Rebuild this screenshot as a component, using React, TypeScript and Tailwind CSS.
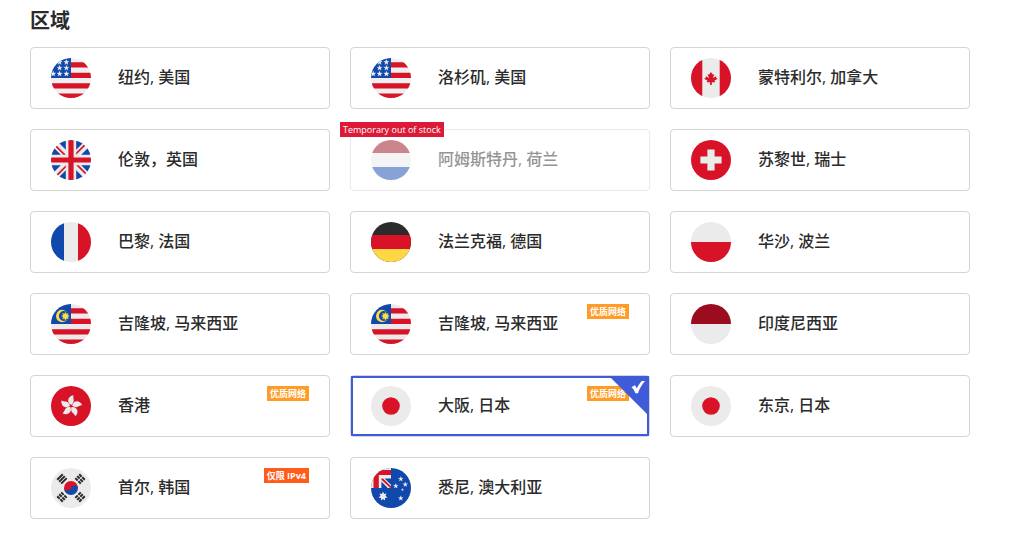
import { useId, useState } from "react";
import type { ReactNode } from "react";

const RED = "#d81227";
const WHITE = "#ebebeb";
const BLUE = "#1148ac";

const STAR =
  "M0-2.7 .65-.85 2.6-.84 1.05.34 1.6 2.2 0 1.1-1.6 2.2-1.05.34-2.6-.84-.65-.85Z";

function Stars({ points, scale }: { points: number[][]; scale: number }) {
  return (
    <>
      {points.map(([x, y]) => (
        <path
          key={`${x}-${y}`}
          d={STAR}
          fill="#f4f4f4"
          stroke="#f4f4f4"
          strokeWidth=".3"
          transform={`translate(${x} ${y}) scale(${scale})`}
        />
      ))}
    </>
  );
}

const usStripes = (
  <path d="M20 4.3h20v5.3H20zM20 14.8h20V20H20zM0 25.2h40v5.2H0zM0 35.6h40V40H0z" fill={RED} />
);

const flags: Record<string, ReactNode> = {
  us: (
    <>
      <rect width="40" height="40" fill="#efefef" />
      {usStripes}
      <path d="M0 0h20v20H0z" fill={BLUE} />
      <Stars
        points={[[8.6, 4.2], [15.4, 4.2], [8.6, 10], [15.4, 10], [2.2, 15.8], [8.6, 15.8], [15.4, 15.8]]}
        scale={1}
      />
    </>
  ),
  my: (
    <>
      <rect width="40" height="40" fill={WHITE} />
      {usStripes}
      <path d="M0 0h20v20H0z" fill={BLUE} />
      <path d="M16.5 8.8A6.2 6.2 0 1 0 16.5 15.2A4.9 4.9 0 1 1 16.5 8.8Z" fill="#ffda44" />
      <path
        d="m14.4 8.2.9 1.7 1.8-.7-.5 1.9 1.8.9-1.7 1 .7 1.900-1.900-.5-1 1.800-1-1.800-1.900.6.6-1.900-1.700-1 1.800-.9-.7-1.900 1.900.6z"
        fill="#ffda44"
        stroke="#ffda44"
        strokeWidth=".3"
      />
    </>
  ),
  ca: (
    <>
      <rect width="40" height="40" fill={WHITE} />
      <path d="M0 0h11.3v40H0zM28.7 0H40v40H28.7z" fill={RED} />
      <path
        d="M299.82 289.39l44.53-22.26-22.26-11.13v-22.26l-44.53 22.26 22.26-44.52h-22.26L255.3 178.09 233.04 211.48h-22.26l22.26 44.52-44.53-22.26V256l-22.26 11.13 44.53 22.26-11.13 22.26h44.53v33.39h22.26v-33.39h44.53z"
        fill={RED}
        transform="scale(.078125)"
      />
    </>
  ),
  gb: (
    <>
      <rect width="40" height="40" fill={WHITE} />
      <path
        d="M0 5l9.8 9.8H0zM5 0l9.8 9.8V0zM35 0l-9.8 9.8V0zM40 5l-9.8 9.8H40zM0 35l9.8-9.8H0zM5 40l9.8-9.8V40zM35 40l-9.8-9.8V40zM40 35l-9.8-9.8H40z"
        fill={BLUE}
      />
      <path d="M17.4 0h5.2v17.4H40v5.2H22.6V40h-5.2V22.6H0v-5.2h17.4z" fill={RED} />
      <path
        d="M4.6 7 3 3l11.8 11.8h-2.4zM35.4 33 37 37 25.2 25.2h2.4zM33 4.6 37 3 25.2 14.8v-2.4zM7 35.4 3 37l11.8-11.8v2.4z"
        fill={RED}
      />
    </>
  ),
  nl: (
    <>
      <rect width="40" height="40" fill={WHITE} />
      <path d="M0 0h40v13H0z" fill="#9b0d1e" />
      <path d="M0 27h40v13H0z" fill={BLUE} />
    </>
  ),
  ch: (
    <>
      <rect width="40" height="40" fill={RED} />
      <path d="M16.4 9.4h7.2v7h7v7.2h-7v7h-7.2v-7h-7v-7.2h7z" fill={WHITE} />
    </>
  ),
  fr: (
    <>
      <rect width="40" height="40" fill={WHITE} />
      <path d="M0 0h13v40H0z" fill={BLUE} />
      <path d="M27 0h13v40H27z" fill={RED} />
    </>
  ),
  de: (
    <>
      <rect width="40" height="40" fill="#2b2b2b" />
      <path d="M0 13h40v14H0z" fill={RED} />
      <path d="M0 27h40v13H0z" fill="#ffd744" />
    </>
  ),
  pl: (
    <>
      <rect width="40" height="40" fill={WHITE} />
      <path d="M0 20h40v20H0z" fill={RED} />
    </>
  ),
  id: (
    <>
      <rect width="40" height="40" fill={WHITE} />
      <path d="M0 0h40v20H0z" fill="#9b0d1e" />
    </>
  ),
  hk: (
    <>
      <rect width="40" height="40" fill={RED} />
      {[0, 72, 144, 216, 288].map((angle) => (
        <path
          key={angle}
          d="M20.2 18.9C15.2 16.5 16.6 9.8 22.6 9.2 21.3 12.6 25 15.2 20.2 18.9Z"
          fill={WHITE}
          transform={`rotate(${angle} 20 20)`}
        />
      ))}
    </>
  ),
  jp: (
    <>
      <rect width="40" height="40" fill={WHITE} />
      <circle cx="20" cy="20" r="8.8" fill={RED} />
    </>
  ),
  kr: (
    <>
      <rect width="40" height="40" fill={WHITE} />
      <path d="M13 20a7 7 0 0 1 14 0z" fill={RED} />
      <path d="M13 20a7 7 0 0 0 14 0z" fill={BLUE} />
      <path d="M13 20a3.5 2.3 0 0 0 7 0z" fill={RED} />
      <path d="M20 20a3.5 2.3 0 0 1 7 0z" fill={BLUE} />
      <g stroke="#2b2b2b" strokeWidth="2">
        <path d="M6.2 11.8 11.8 6.2M8.2 13.7 13.8 8.1M10.2 15.6 15.7 10.1" />
        <path d="M28.2 6.2 33.8 11.8M26.2 8.1 31.8 13.7M24.3 10.1 29.8 15.6" strokeDasharray="3.5 .9" />
        <path d="M6.2 28.2 11.8 33.8M8.2 26.3 13.8 31.9M10.2 24.4 15.7 29.9" strokeDasharray="3.5 .9" />
        <path d="M28.2 33.8 33.8 28.2M26.2 31.9 31.8 26.3M24.3 29.9 29.8 24.4" strokeDasharray="3.5 .9" />
      </g>
    </>
  ),
  au: (
    <>
      <rect width="40" height="40" fill={BLUE} />
      <path d="M0 0h20v20H0z" fill={WHITE} />
      <path d="M2.5 20V7.5L7.5 2H20v5H7.8v13z" fill={RED} />
      <path d="M10.4 13.6V20h6.4zM13.6 10.4H20v6.4z" fill={BLUE} />
      <path d="M10.4 10.4h1.7L20 18.3V20h-.7l-8.9-8.2z" fill={RED} />
      <path
        d="m12 23.6 1.1 2.4 2.5-.6-1.1 2.4 2 1.6-2.5.6v2.6L12 31l-2 1.6V30l-2.5-.6 2-1.6-1.1-2.4 2.5.6z"
        fill={WHITE}
      />
      <Stars points={[[29.8, 11], [24.8, 18], [34.3, 16.4], [29.8, 30.2]]} scale={0.9} />
      <Stars points={[[31.5, 21.7]]} scale={0.5} />
    </>
  ),
};

function Flag({ code }: { code: string }) {
  const clip = useId();
  return (
    <svg viewBox="0 0 40 40" className="size-10 shrink-0" aria-hidden="true">
      <clipPath id={clip}>
        <circle cx="20" cy="20" r="20" />
      </clipPath>
      <g clipPath={`url(#${clip})`}>{flags[code]}</g>
    </svg>
  );
}

interface Region {
  id: string;
  flag: string;
  name: string;
  tag?: string;
  tagColor?: string;
  soldOut?: boolean;
}

const regions: Region[] = [
  { id: "nyc", flag: "us", name: "纽约, 美国" },
  { id: "lax", flag: "us", name: "洛杉矶, 美国" },
  { id: "yul", flag: "ca", name: "蒙特利尔, 加拿大" },
  { id: "lon", flag: "gb", name: "伦敦，英国" },
  { id: "ams", flag: "nl", name: "阿姆斯特丹, 荷兰", soldOut: true },
  { id: "zrh", flag: "ch", name: "苏黎世, 瑞士" },
  { id: "par", flag: "fr", name: "巴黎, 法国" },
  { id: "fra", flag: "de", name: "法兰克福, 德国" },
  { id: "waw", flag: "pl", name: "华沙, 波兰" },
  { id: "kul", flag: "my", name: "吉隆坡, 马来西亚" },
  { id: "kul-premium", flag: "my", name: "吉隆坡, 马来西亚", tag: "优质网络", tagColor: "bg-[#ff9b26]" },
  { id: "idn", flag: "id", name: "印度尼西亚" },
  { id: "hkg", flag: "hk", name: "香港", tag: "优质网络", tagColor: "bg-[#ff9b26]" },
  { id: "osa", flag: "jp", name: "大阪, 日本", tag: "优质网络", tagColor: "bg-[#ff9b26]" },
  { id: "tyo", flag: "jp", name: "东京, 日本" },
  { id: "sel", flag: "kr", name: "首尔, 韩国", tag: "仅限 IPv4", tagColor: "bg-[#ff5c1c]" },
  { id: "syd", flag: "au", name: "悉尼, 澳大利亚" },
];

function RegionCard({
  region,
  selected,
  onSelect,
}: {
  region: Region;
  selected: boolean;
  onSelect: () => void;
}) {
  return (
    <label className="relative block has-focus-visible:outline-2 has-focus-visible:outline-[#3f5bd8]">
      <input
        type="radio"
        name="region"
        value={region.id}
        checked={selected}
        disabled={region.soldOut}
        onChange={onSelect}
        className="sr-only"
      />
      <span
        className={`flex items-center gap-[27px] rounded border border-[#d5d5d5] px-5 py-2.5 ${
          region.soldOut ? "opacity-50" : "cursor-pointer"
        }`}
      >
        <Flag code={region.flag} />
        <span className="pb-0.5 text-base font-medium">{region.name}</span>
      </span>
      {region.tag && (
        <span
          className={`absolute top-[11px] right-[21px] px-[3px] text-[9px] leading-[15px] font-bold text-white ${region.tagColor}`}
        >
          {region.tag}
        </span>
      )}
      {region.soldOut && (
        <span className="absolute -top-[7px] -left-2.5 bg-[#dc1a38] px-[3px] text-[9px] leading-[15px] font-medium text-white">
          Temporary out of stock
        </span>
      )}
      {selected && (
        <span className="pointer-events-none absolute inset-px border-2 border-[#3f5bd8]">
          <svg viewBox="0 0 40 40" className="absolute -top-0.5 -right-0.5 size-10" aria-hidden="true">
            <path d="M0 0h40v40z" fill="#3f5bd8" />
            <path
              d="M22.5 11.3 25.7 9.3C26.7 10 27.4 11 27.8 12.4 29.6 9 31.3 6.3 32.8 5H36C33 8.5 30.5 12.5 29 17.2H26.4C25.3 14.5 24.3 12.8 22.5 11.3Z"
              fill="#fff"
            />
          </svg>
        </span>
      )}
    </label>
  );
}

export default function App() {
  const [selected, setSelected] = useState("osa");

  return (
    <main className="bg-white pt-2 pr-[43px] pb-10 pl-[30px] font-['Open_Sans','Noto_Sans_CJK_SC',sans-serif] text-[#2b2b2b]">
      <h2 id="region-title" className="mb-[13px] text-xl leading-[26px] font-bold">
        区域
      </h2>
      <div role="radiogroup" aria-labelledby="region-title" className="grid grid-cols-3 gap-5">
        {regions.map((region) => (
          <RegionCard
            key={region.id}
            region={region}
            selected={selected === region.id}
            onSelect={() => setSelected(region.id)}
          />
        ))}
      </div>
    </main>
  );
}
